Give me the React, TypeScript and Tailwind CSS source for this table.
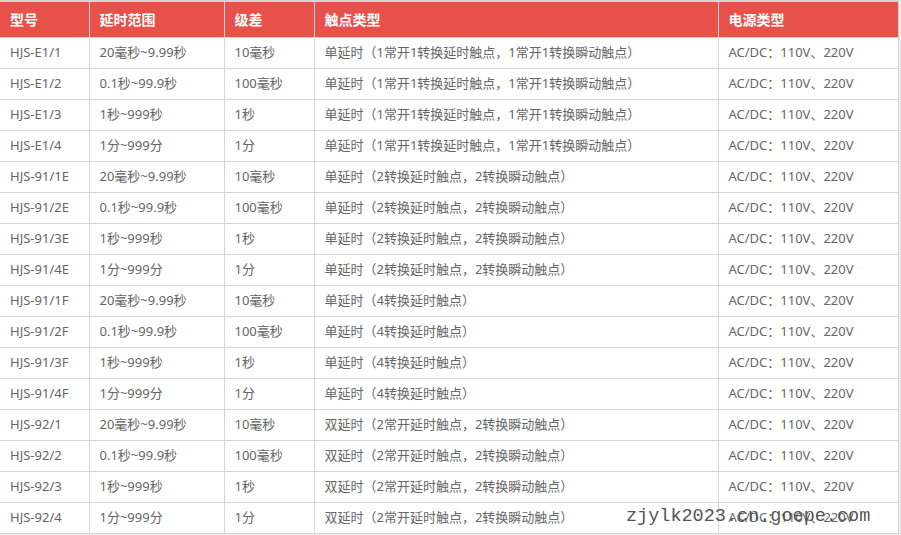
const ranges = [
  ['20毫秒~9.99秒', '10毫秒'],
  ['0.1秒~99.9秒', '100毫秒'],
  ['1秒~999秒', '1秒'],
  ['1分~999分', '1分'],
]

const groups = [
  { models: ['HJS-E1/1', 'HJS-E1/2', 'HJS-E1/3', 'HJS-E1/4'], contact: '单延时（1常开1转换延时触点，1常开1转换瞬动触点）' },
  { models: ['HJS-91/1E', 'HJS-91/2E', 'HJS-91/3E', 'HJS-91/4E'], contact: '单延时（2转换延时触点，2转换瞬动触点）' },
  { models: ['HJS-91/1F', 'HJS-91/2F', 'HJS-91/3F', 'HJS-91/4F'], contact: '单延时（4转换延时触点）' },
  { models: ['HJS-92/1', 'HJS-92/2', 'HJS-92/3', 'HJS-92/4'], contact: '双延时（2常开延时触点，2转换瞬动触点）' },
]

const rows = groups.flatMap((g) =>
  g.models.map((model, i) => ({
    model,
    range: ranges[i][0],
    step: ranges[i][1],
    contact: g.contact,
    power: 'AC/DC：110V、220V',
  }))
)

const headers = ['型号', '延时范围', '级差', '触点类型', '电源类型']

export default function App() {
  return (
    <div className="relative w-[901px] h-[535px] bg-[#ebebeb] font-['Noto_Sans','Noto_Sans_CJK_SC',sans-serif] overflow-hidden">
      <table className="w-[898px] table-fixed border-collapse bg-white text-[13px] text-[#666666]">
        <colgroup>
          <col className="w-[89px]" />
          <col className="w-[135px]" />
          <col className="w-[90px]" />
          <col className="w-[404px]" />
          <col className="w-[180px]" />
        </colgroup>
        <thead>
          <tr className="h-[36px] bg-[#e8504a] text-white">
            {headers.map((h, i) => (
              <th
                key={h}
                className={`border-[#d5d5d5] border-t-2 border-r border-b text-left font-bold text-[14px] pl-[10px] pt-[1px] ${i === 0 ? 'border-l-0' : 'border-l'}`}
              >
                {h}
              </th>
            ))}
          </tr>
        </thead>
        <tbody>
          {rows.map((r) => (
            <tr key={r.model} className="h-[31px]">
              <td className="border-b border-r border-[#d5d5d5] pl-[10px] whitespace-nowrap">{r.model}</td>
              <td className="border border-[#d5d5d5] pl-[10px] whitespace-nowrap">{r.range}</td>
              <td className="border border-[#d5d5d5] pl-[10px] whitespace-nowrap">{r.step}</td>
              <td className="border border-[#d5d5d5] pl-[10px] whitespace-nowrap">{r.contact}</td>
              <td className="border border-[#d5d5d5] pl-[10px] whitespace-nowrap">{r.power}</td>
            </tr>
          ))}
        </tbody>
      </table>
      {/* watermark laid over the last row */}
      <div className="absolute left-[626px] top-[508px] font-['Liberation_Mono',monospace] text-[18.5px] leading-none text-[#555555]">
        zjylk2023.cn.goepe.com
      </div>
    </div>
  )
}
